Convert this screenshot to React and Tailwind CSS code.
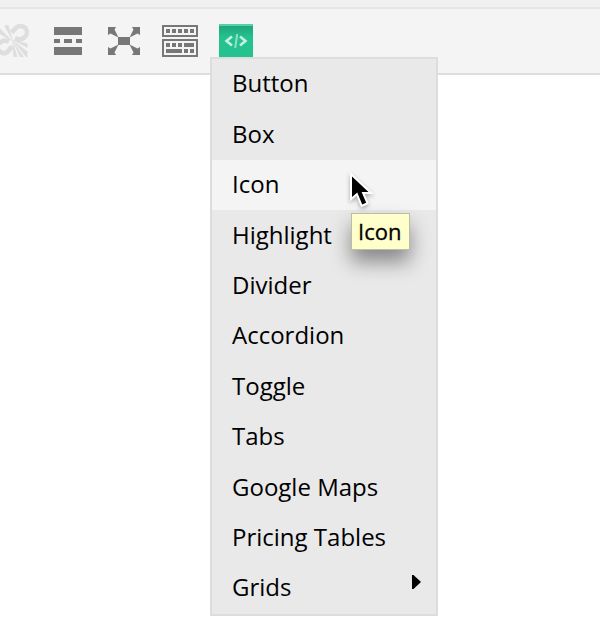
const items = [
  'Button', 'Box', 'Icon', 'Highlight', 'Divider', 'Accordion',
  'Toggle', 'Tabs', 'Google Maps', 'Pricing Tables',
];

function UnlinkIcon() {
  return (
    <svg className="h-9 w-8 shrink-0" viewBox="0 0 32 36" fill="none">
      <g stroke="#dedede" strokeWidth="4.6">
        <path d="M13.500 10.500L18.300 5.700A6.300 6.300 0 0 1 27.700 14L25.500 16Q23 18.500 17 16.500" />
        <path d="M14 24.500L9.500 30A6.300 6.300 0 0 1 0.300 22L3 19.800Q6 17.500 11 19.500" />
      </g>
      <g fill="#dedede">
        <path d="M15 19.500L6 3.500L10.500 3Z" />
        <path d="M15 19.500L1 5.500L0 11Z" />
        <path d="M14 17.500L29.500 29.500L29.500 35H28Z" />
        <path d="M14 17.500L29.500 21.500L29.500 26Z" />
        <path d="M14 18L19.500 35L15.500 35Z" />
        <path d="M14 18L26 35L22 35Z" />
      </g>
    </svg>
  );
}

function ReadMoreIcon() {
  return (
    <svg className="h-7 w-7 shrink-0" viewBox="0 0 28 28" fill="#777">
      <path d="M0 0H28V8H0ZM0 12H6V16H0ZM10 12H18V16H10ZM22 12H28V16H22ZM0 20H28V28H0Z" />
    </svg>
  );
}

function ExpandIcon() {
  return (
    <svg className="h-7 w-8 shrink-0" viewBox="0 0 32 28" fill="#777">
      <path d="M10 10H22V18H10Z" />
      <path d="M0 0H8L6.500 2.500L10.500 10.500L2.500 6.500L0 8Z" />
      <path d="M32 0H24L25.500 2.500L21.500 10.500L29.500 6.500L32 8Z" />
      <path d="M0 28H8L6.500 25.500L10.500 17.500L2.500 21.500L0 20Z" />
      <path d="M32 28H24L25.500 25.500L21.500 17.500L29.500 21.500L32 20Z" />
    </svg>
  );
}

function KeyboardIcon() {
  return (
    <svg className="h-8 w-9 shrink-0" viewBox="0 0 36 32">
      <path d="M1 1H35V11H1ZM1 15H35V31H1Z" fill="none" stroke="#777" strokeWidth="2" />
      <path
        fill="#777"
        d="M4 4h4v4h-4ZM10 4h4v4h-4ZM16 4h4v4h-4ZM22 4h4v4h-4ZM28 4h4v4h-4ZM4 18h4v4h-4ZM10 18h4v4h-4ZM16 18h4v4h-4ZM22 18h10v4h-10ZM4 24h16v4h-16ZM22 24h4v4h-4ZM28 24h4v4h-4Z"
      />
    </svg>
  );
}

function ShortcodeIcon() {
  return (
    <div className="flex h-[34px] w-[34px] shrink-0 items-center justify-center border-t-2 border-[#56d0a8] bg-linear-to-b from-[#20a67c] to-[#25c18f] to-35%">
      <svg className="h-4 w-6" viewBox="0 0 24 16" fill="none" stroke="#c4f0e0" strokeWidth="2.600">
        <path d="M8 2.500L2.500 7L8 11.500M16 2.500L21.500 7L16 11.500" />
        <path d="M13.200 0L11.200 14" strokeWidth="2" stroke="#92dfc5" />
      </svg>
    </div>
  );
}

function Cursor() {
  return (
    <svg
      className="absolute left-[345px] top-[168px] h-11 w-8 drop-shadow-[0_2px_2px_rgba(0,0,0,0.3)]"
      viewBox="0 0 32 44"
    >
      <path
        d="M7 8.500V29L12.300 24.500L17.200 36.500L21.200 34.800L16.600 24H23.500Z"
        fill="#000"
        stroke="#fff"
        strokeWidth="4"
        paintOrder="stroke"
      />
    </svg>
  );
}

export default function App() {
  return (
    <div className="relative h-[636px] w-[600px] overflow-hidden bg-white font-['Open_Sans','Noto_Sans',sans-serif] text-black">
      <div className="h-[9px] border-b-2 border-[#e5e5e5] bg-[#f0f0f0]" />
      <div className="flex h-[66px] items-start border-b-2 border-[#ddd] bg-[#f4f4f4]">
        <div className="-ml-0.5 mt-[13px] flex"><UnlinkIcon /></div>
        <div className="ml-6 mt-[18px] flex"><ReadMoreIcon /></div>
        <div className="ml-[26px] mt-[18px] flex"><ExpandIcon /></div>
        <div className="ml-[22px] mt-4 flex"><KeyboardIcon /></div>
        <div className="ml-[21px] mt-[15px] flex"><ShortcodeIcon /></div>
      </div>

      <ul className="absolute left-[210px] top-[57px] flex h-[559px] w-[228px] flex-col border-2 border-[#ddd] bg-[#e9e9e9] text-[24px] leading-8">
        {items.map((label) => (
          <li
            key={label}
            className={
              label === 'Icon'
                ? 'flex h-[50.45px] items-center bg-[#f4f4f4] pb-[2px] pl-5'
                : 'flex h-[50.45px] items-center pb-[2px] pl-5'
            }
          >
            <span className="whitespace-nowrap">{label}</span>
          </li>
        ))}
        <li className="flex h-[50.45px] items-center justify-between pb-[3.4px] pl-5 pr-[15px]">
          <span>Grids</span>
          <svg className="-mt-2.5 h-4 w-[9px]" viewBox="0 0 9 16">
            <path d="M0 1H1.500L9 8L1.500 15H0Z" />
          </svg>
        </li>
      </ul>

      <div className="absolute left-[351px] top-[213px] flex h-[37px] w-[59px] items-center border border-[#bdbda6] bg-[#ffffcc] pb-0.5 pl-1.5 text-[22px] leading-7 shadow-[0_12px_20px_rgba(0,0,0,0.42)] [-webkit-text-stroke:0.3px_black]">
        Icon
      </div>
      <Cursor />
    </div>
  );
}
